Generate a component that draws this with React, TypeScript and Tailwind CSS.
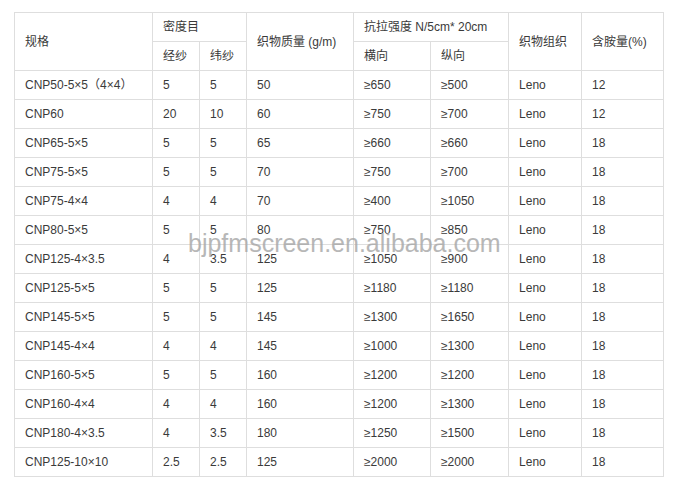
import React from 'react';

type Row = [string, string, string, string, string, string, string, string];

const rows: Row[] = [
  ['CNP50-5×5（4×4）', '5', '5', '50', '≥650', '≥500', 'Leno', '12'],
  ['CNP60', '20', '10', '60', '≥750', '≥700', 'Leno', '12'],
  ['CNP65-5×5', '5', '5', '65', '≥660', '≥660', 'Leno', '18'],
  ['CNP75-5×5', '5', '5', '70', '≥750', '≥700', 'Leno', '18'],
  ['CNP75-4×4', '4', '4', '70', '≥400', '≥1050', 'Leno', '18'],
  ['CNP80-5×5', '5', '5', '80', '≥750', '≥850', 'Leno', '18'],
  ['CNP125-4×3.5', '4', '3.5', '125', '≥1050', '≥900', 'Leno', '18'],
  ['CNP125-5×5', '5', '5', '125', '≥1180', '≥1180', 'Leno', '18'],
  ['CNP145-5×5', '5', '5', '145', '≥1300', '≥1650', 'Leno', '18'],
  ['CNP145-4×4', '4', '4', '145', '≥1000', '≥1300', 'Leno', '18'],
  ['CNP160-5×5', '5', '5', '160', '≥1200', '≥1200', 'Leno', '18'],
  ['CNP160-4×4', '4', '4', '160', '≥1200', '≥1300', 'Leno', '18'],
  ['CNP180-4×3.5', '4', '3.5', '180', '≥1250', '≥1500', 'Leno', '18'],
  ['CNP125-10×10', '2.5', '2.5', '125', '≥2000', '≥2000', 'Leno', '18'],
];

const cell = 'border border-[#dedede] px-[10px] h-[29px] p-0 text-left align-middle font-normal';

export default function App() {
  return (
    <div className="relative w-[686px] h-[496px] bg-white pt-[12px] pl-[14px] text-[12px] text-[#3a3a3a] font-['Liberation_Sans','Noto_Sans_CJK_SC',sans-serif]">
      <table className="table-fixed border-collapse w-[649px]">
        <colgroup>
          <col className="w-[138px]" />
          <col className="w-[47px]" />
          <col className="w-[47px]" />
          <col className="w-[107px]" />
          <col className="w-[77px]" />
          <col className="w-[78px]" />
          <col className="w-[73px]" />
          <col className="w-[82px]" />
        </colgroup>
        <thead>
          <tr>
            <th rowSpan={2} className={cell}>规格</th>
            <th colSpan={2} className={cell}>密度目</th>
            <th rowSpan={2} className={cell}>织物质量 (g/m)</th>
            <th colSpan={2} className={cell}>抗拉强度 N/5cm* 20cm</th>
            <th rowSpan={2} className={cell}>织物组织</th>
            <th rowSpan={2} className={cell}>含胺量(%)</th>
          </tr>
          <tr>
            <th className={cell}>经纱</th>
            <th className={cell}>纬纱</th>
            <th className={cell}>横向</th>
            <th className={cell}>纵向</th>
          </tr>
        </thead>
        <tbody>
          {rows.map((r) => (
            <tr key={r[0]}>
              {r.map((v, i) => (
                <td key={i} className={cell}>{v}</td>
              ))}
            </tr>
          ))}
        </tbody>
      </table>

      {/* site watermark over the table */}
      <div className="absolute left-[188px] top-[228px] text-[25px] leading-[30px] text-[#a6a6a6] opacity-80 pointer-events-none whitespace-nowrap">
        bjpfmscreen.en.alibaba.com
      </div>
    </div>
  );
}
